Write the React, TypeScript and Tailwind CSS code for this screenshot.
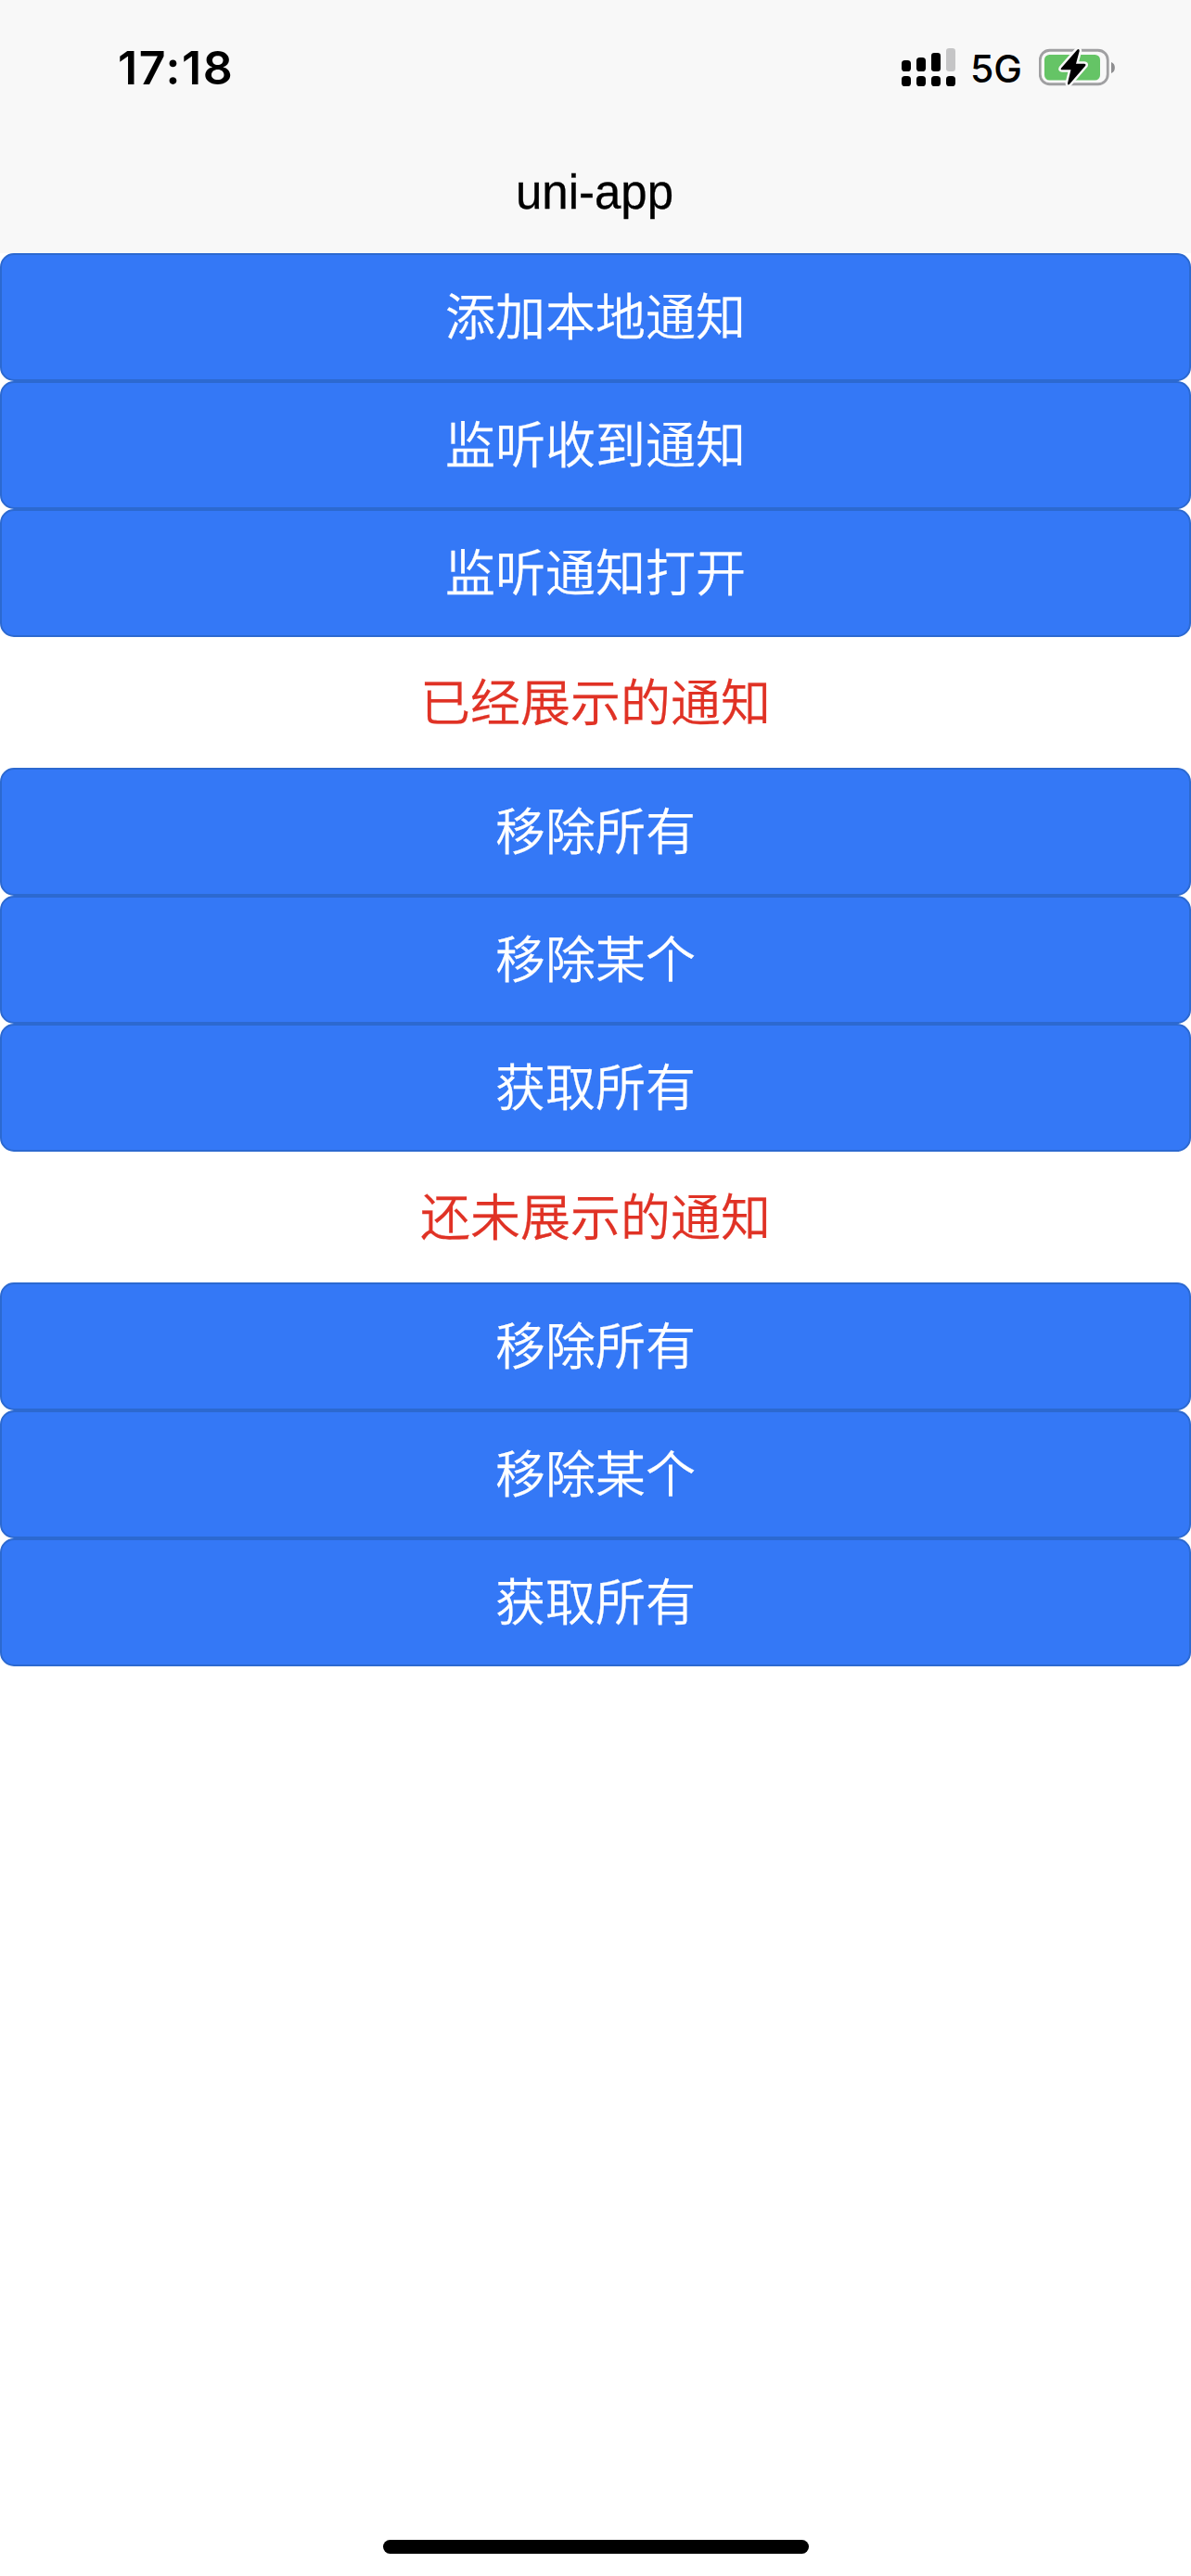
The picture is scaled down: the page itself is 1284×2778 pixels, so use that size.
import React from "react";

const cjk = "font-['Noto_Sans_CJK_SC',sans-serif]";

function SignalIcon() {
  return (
    <svg width="58" height="42" viewBox="0 0 58 42">
      <rect x="0" y="13" width="10" height="12" rx="3.6" />
      <rect x="16" y="10" width="10" height="15" rx="3.6" />
      <rect x="32" y="5" width="10" height="20" rx="3.2" />
      <rect x="48" y="0" width="10" height="25" rx="3.2" fill="#c5c5c6" />
      <rect x="0" y="30" width="10" height="11" rx="3.6" />
      <rect x="16" y="30" width="10" height="11" rx="3.6" />
      <rect x="32" y="30" width="10" height="11" rx="3.6" />
      <rect x="48" y="30" width="10" height="11" rx="3.6" />
    </svg>
  );
}

function BatteryIcon() {
  return (
    <svg width="83" height="44" viewBox="0 0 83 44">
      <rect x="1.25" y="3.25" width="73" height="36.5" rx="10.5" fill="none" stroke="#a0a0a2" strokeWidth="2.8" />
      <path d="M78 16 C83.2 17.5 83.2 26.5 78 28 Z" fill="#8e8e90" />
      <rect x="6" y="8" width="60" height="27.5" rx="5.5" fill="#65c466" />
      <path
        d="M41.5 2.5 L24 22.5 Q23 24.3 25 24.3 L34.5 24.3 L31 38.7 Q31 41.5 33 39.7 L50.3 19.7 Q51 17.7 49 17.7 L40 17.7 L43.7 4 Q43.7 1.2 41.5 2.5 Z"
        fill="#000"
        stroke="#f8f8f8"
        strokeWidth="5"
        strokeLinejoin="round"
        paintOrder="stroke"
      />
    </svg>
  );
}

function ActionButton({ label }: { label: string }) {
  return (
    <button className="flex h-[138px] w-full items-center justify-center rounded-[15px] border-2 border-[#2c69d0] bg-[#3478f6] pb-[7px] text-[54px] leading-none font-[350] text-white [-webkit-text-stroke:0.25px]">
      {label}
    </button>
  );
}

function SectionTitle({ label }: { label: string }) {
  return (
    <h2 className="flex h-[141px] items-center justify-center pb-[5px] text-[54px] leading-none font-[350] text-[#e03225] [-webkit-text-stroke:0.25px]">
      {label}
    </h2>
  );
}

export default function App() {
  return (
    <div className={`flex h-[2778px] w-[1284px] flex-col bg-white ${cjk}`}>
      <header className="bg-[#f8f8f8] font-['Inter',sans-serif] text-black">
        <div className="flex h-[141px] items-center justify-between pt-[5px] pr-[81px] pl-[127px]">
          <span className="text-[50px] leading-none font-semibold tracking-[1.6px]">17:18</span>
          <div className="flex items-center">
            <SignalIcon />
            <span className="ml-[16px] w-[57px] pt-[2px] text-[41px] leading-none font-[450]">5G</span>
            <span className="ml-[17px]">
              <BatteryIcon />
            </span>
          </div>
        </div>
        <h1 className="flex h-[132px] items-center justify-center pt-[1px] pr-[2px] font-['Liberation_Sans',sans-serif] text-[51px] leading-none [-webkit-text-stroke:0.3px]">
          uni-app
        </h1>
      </header>
      <main className="flex grow flex-col">
        <ActionButton label="添加本地通知" />
        <ActionButton label="监听收到通知" />
        <ActionButton label="监听通知打开" />
        <SectionTitle label="已经展示的通知" />
        <ActionButton label="移除所有" />
        <ActionButton label="移除某个" />
        <ActionButton label="获取所有" />
        <SectionTitle label="还未展示的通知" />
        <ActionButton label="移除所有" />
        <ActionButton label="移除某个" />
        <ActionButton label="获取所有" />
      </main>
      <footer className="flex justify-center pb-[24px]">
        <div className="h-[15px] w-[459px] rounded-full bg-black" />
      </footer>
    </div>
  );
}
